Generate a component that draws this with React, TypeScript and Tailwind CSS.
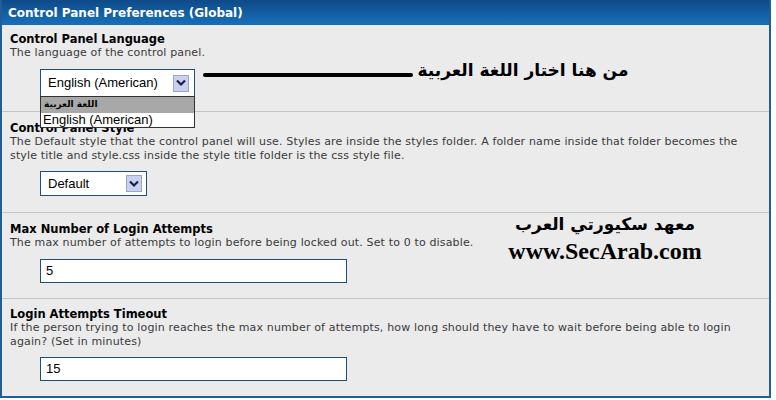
import React from "react";

const Chevron = () => (
  <span className="flex h-[17px] w-[16px] items-center justify-center border border-[#9aa6c8] bg-[#c9d1ee]">
    <svg width="10" height="8" viewBox="0 0 10 8">
      <path d="M1 1.5 L5 5.5 L9 1.5" fill="none" stroke="#1a1f4a" strokeWidth="2.2" />
    </svg>
  </span>
);

const Title = ({ children }: { children: React.ReactNode }) => (
  <div className="text-[11.5px] font-bold leading-[14px] text-black">{children}</div>
);
const Desc = ({ children }: { children: React.ReactNode }) => (
  <div className="whitespace-nowrap text-[11px] leading-[14px] tracking-[0.15px] text-[#3a3a3a]">{children}</div>
);

export default function App() {
  return (
    <div className="relative h-[400px] w-[776px] overflow-hidden bg-white font-['DejaVu_Sans',sans-serif]">
      <div className="w-[771px] border-b-2 border-l-2 border-r-2 border-[#1f5f95] bg-[#ebebeb]">
        <div className="flex h-[25px] items-center bg-[linear-gradient(#0f4a88,#1670ba)] pl-[6px] text-[12px] font-bold text-white">
          Control Panel Preferences (Global)
        </div>

        {/* Section 1 */}
        <div className="border-b border-[#c4c4c4] px-[8px] pb-[14px] pt-[7px]">
          <Title>Control Panel Language</Title>
          <Desc>The language of the control panel.</Desc>
          <div className="ml-[30px] mt-[9px] flex h-[28px] w-[155px] items-center justify-between border border-[#1f4e79] bg-white pl-[7px] pr-[5px] font-['Liberation_Sans',sans-serif] text-[13px] text-black">
            <span>English (American)</span>
            <Chevron />
          </div>
        </div>

        {/* Section 2 */}
        <div className="border-b border-[#c4c4c4] px-[8px] pb-[16px] pt-[9px]">
          <Title>Control Panel Style</Title>
          <Desc>
            The Default style that the control panel will use. Styles are inside the styles folder. A folder name inside that folder becomes the
            <br />
            style title and style.css inside the style title folder is the css style file.
          </Desc>
          <div className="ml-[30px] mt-[8px] flex h-[25px] w-[107px] items-center justify-between border border-[#1f4e79] bg-white pl-[7px] pr-[4px] font-['Liberation_Sans',sans-serif] text-[13px] text-black">
            <span>Default</span>
            <Chevron />
          </div>
        </div>

        {/* Section 3 */}
        <div className="border-b border-[#c4c4c4] px-[8px] pb-[15px] pt-[9px]">
          <Title>Max Number of Login Attempts</Title>
          <Desc>The max number of attempts to login before being locked out. Set to 0 to disable.</Desc>
          <div className="ml-[30px] mt-[9px] flex h-[24px] w-[307px] items-center border border-[#1f4e79] bg-white pl-[5px] font-['Liberation_Sans',sans-serif] text-[13px] text-black">
            5
          </div>
        </div>

        {/* Section 4 */}
        <div className="px-[8px] pb-[15px] pt-[8px]">
          <Title>Login Attempts Timeout</Title>
          <Desc>
            If the person trying to login reaches the max number of attempts, how long should they have to wait before being able to login
            <br />
            again? (Set in minutes)
          </Desc>
          <div className="ml-[30px] mt-[8px] flex h-[24px] w-[307px] items-center border border-[#1f4e79] bg-white pl-[5px] font-['Liberation_Sans',sans-serif] text-[13px] text-black">
            15
          </div>
        </div>
      </div>

      {/* Open dropdown list */}
      <div className="absolute left-[40px] top-[96px] w-[155px] border border-[#333] bg-white">
        <div className="flex h-[16px] items-center bg-[#a8a8a8] pl-[3px] text-[9px] font-bold text-black">
          <span dir="rtl">اللغة العربية</span>
        </div>
        <div className="h-[14px] pl-[2px] font-['Liberation_Sans',sans-serif] text-[13px] leading-[14px] text-black">
          English (American)
        </div>
      </div>

      {/* Annotation line */}
      <div className="absolute left-[203px] top-[73px] h-[4px] w-[210px] rounded-full bg-black" />
      <div dir="rtl" className="absolute left-[416px] top-[58px] w-[214px] whitespace-nowrap text-center text-[17px] font-bold leading-[24px] text-black">
        من هنا اختار اللغة العربية
      </div>

      {/* Watermark */}
      <div className="absolute left-[500px] top-[210px] flex w-[210px] flex-col items-center text-black">
        <div dir="rtl" className="whitespace-nowrap text-[17px] font-bold leading-[28px]">معهد سكيورتي العرب</div>
        <div className="whitespace-nowrap font-['Liberation_Serif',serif] text-[24px] font-bold leading-[26px]">www.SecArab.com</div>
      </div>
    </div>
  );
}
